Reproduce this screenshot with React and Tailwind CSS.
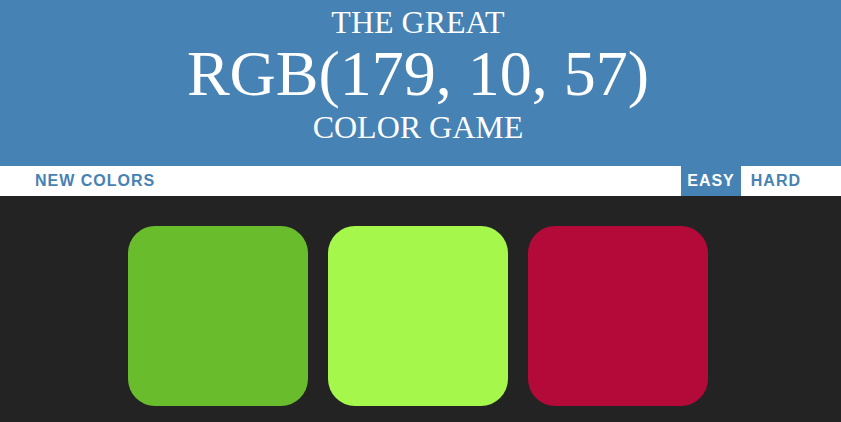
import React, { useState } from "react";

const App = () => {
  const [mode, setMode] = useState("easy");
  const colors = ["rgb(105, 189, 45)", "rgb(165, 248, 75)", "rgb(179, 10, 57)"];

  return (
    <div className="min-h-[422px] bg-[#232323]">
      <h1
        className="h-[166px] bg-[#4682b4] text-white text-center font-normal pr-[5px]"
        style={{ fontFamily: '"Liberation Serif", "Times New Roman", serif' }}
      >
        <span className="block text-[32px] leading-[44px]">THE GREAT</span>
        <span className="block text-[64px] leading-[59px]">RGB(179, 10, 57)</span>
        <span className="block text-[32px] leading-[48px]">COLOR GAME</span>
      </h1>

      <div
        className="flex items-stretch h-[30px] bg-white text-[16px] font-bold tracking-[1px] leading-[30px]"
        style={{ fontFamily: '"Liberation Sans", Arial, sans-serif' }}
      >
        <button className="pl-[35px] pr-[7px] text-[#4682b4] leading-[30px]">NEW COLORS</button>
        <span className="flex-1" />
        <button
          onClick={() => setMode("easy")}
          className={`px-[6px] leading-[30px] ${
            mode === "easy" ? "bg-[#4682b4] text-white" : "text-[#4682b4]"
          }`}
        >
          EASY
        </button>
        <button
          onClick={() => setMode("hard")}
          className={`pl-[10px] pr-[8px] mr-[32px] leading-[30px] ${
            mode === "hard" ? "bg-[#4682b4] text-white" : "text-[#4682b4]"
          }`}
        >
          HARD
        </button>
      </div>

      <div className="pr-[5px]">
        <div className="w-[600px] mx-auto mt-[20px] flex">
          {colors.map((c, i) => (
            <div
              key={i}
              className="w-[180px] h-[180px] m-[10px] rounded-[27px]"
              style={{ backgroundColor: c }}
            />
          ))}
        </div>
      </div>
    </div>
  );
};

export default App;
